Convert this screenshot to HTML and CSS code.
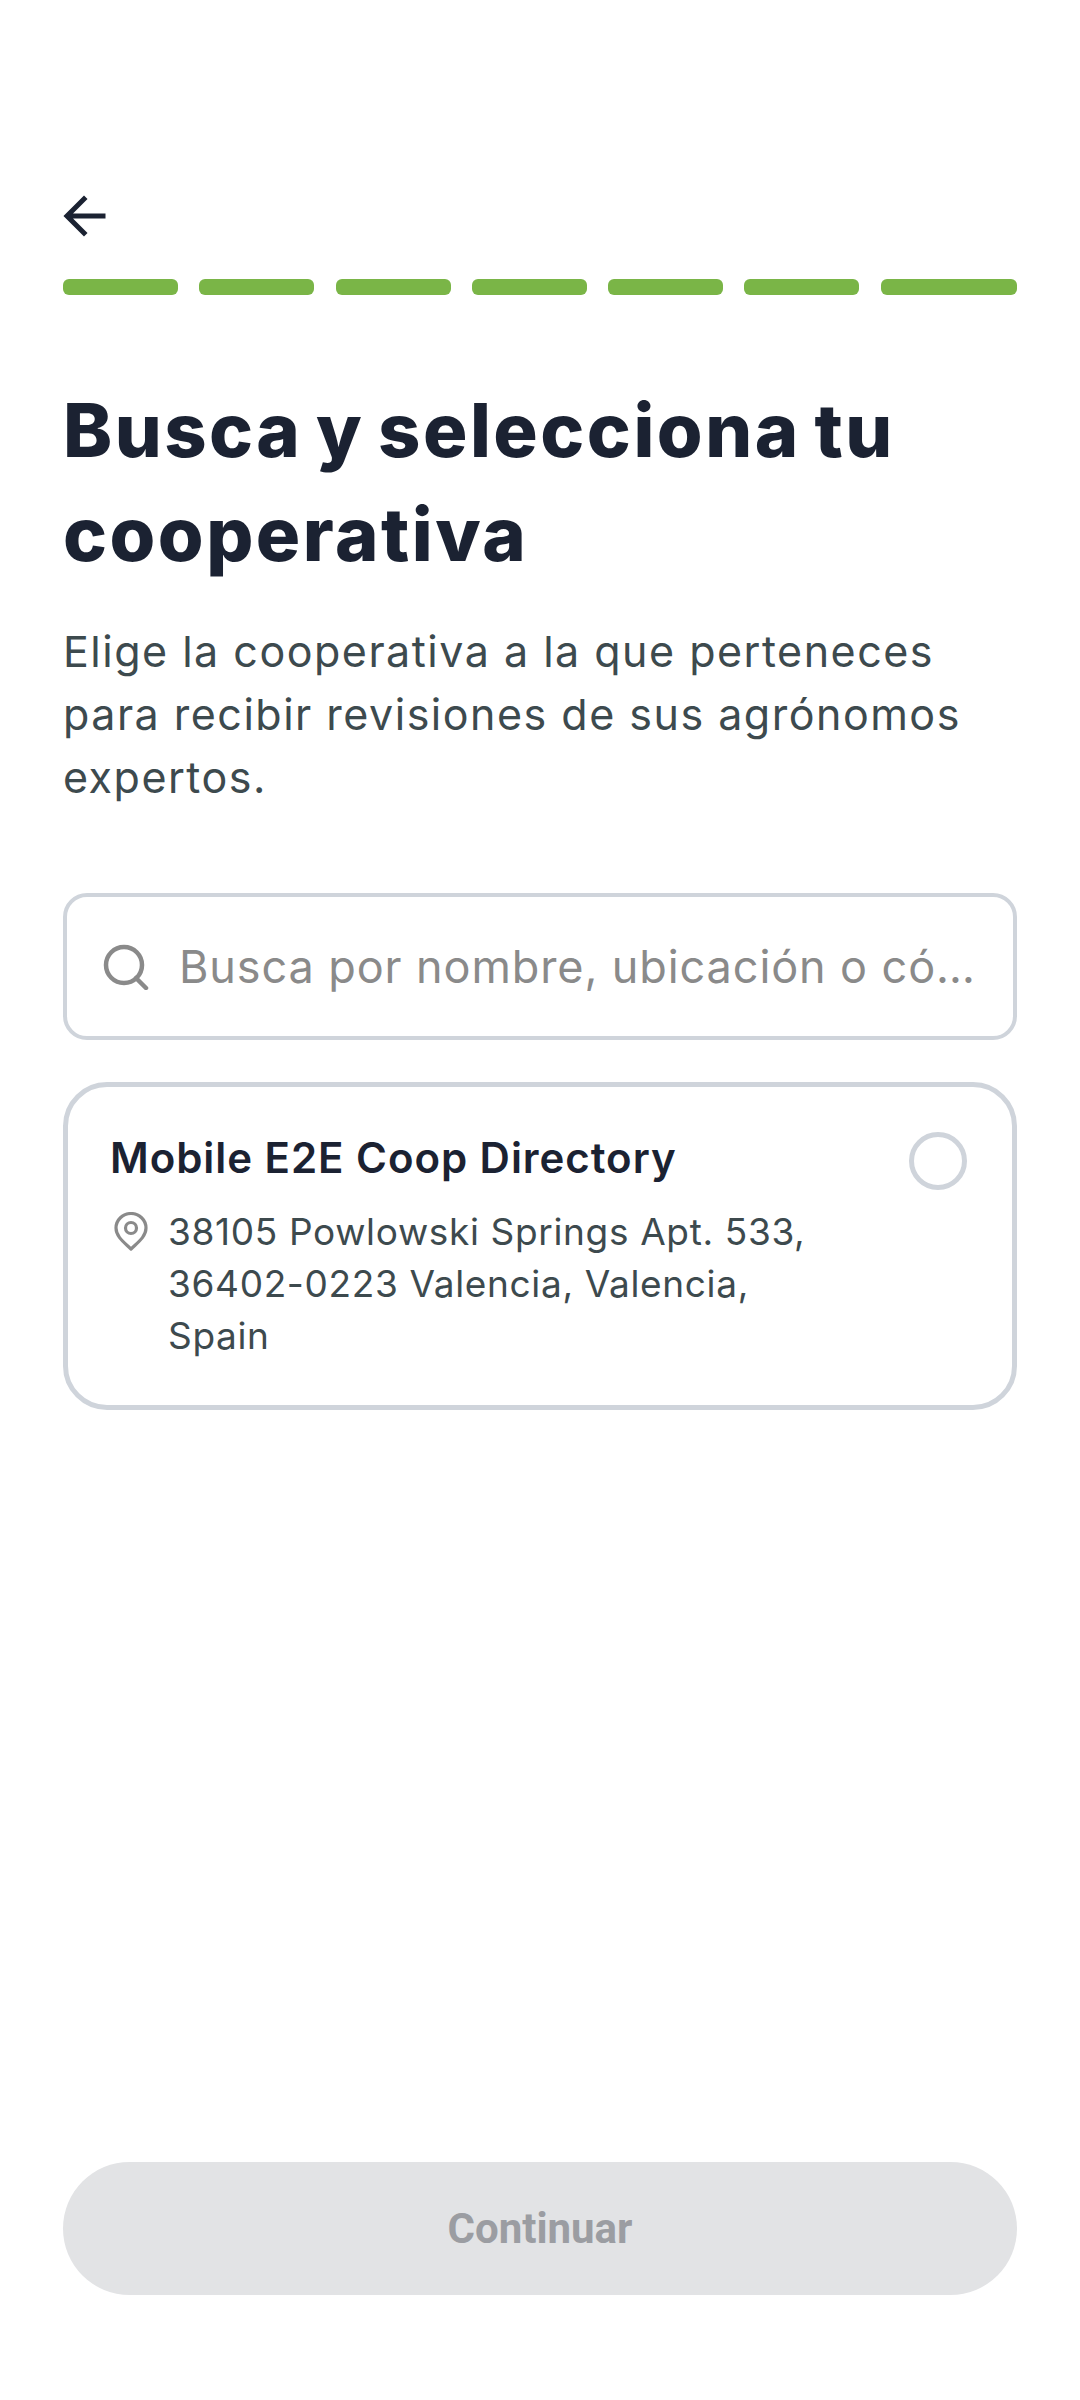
FILE: index.html
```html
<!DOCTYPE html>
<html lang="es">
<head>
    <meta charset="UTF-8">
    <meta name="viewport" content="width=device-width, initial-scale=1.0">
    <title>Busca y selecciona tu cooperativa</title>
    <link rel="stylesheet" href="styles.css">
</head>
<body>
    <main class="screen">
        <button class="back" type="button" aria-label="Volver">
            <svg viewBox="0 0 44 44" width="44" height="44" fill="none" stroke="#1b2232" stroke-width="5" stroke-linecap="square" stroke-linejoin="miter">
                <path d="M21 4 L4 21 L21 38 M6 21 H40"/>
            </svg>
        </button>

        <div class="progress">
            <span></span><span></span><span></span><span></span><span></span><span></span><span></span>
        </div>

        <h1>Busca y selecciona tu cooperativa</h1>
        <p class="intro">Elige la cooperativa a la que perteneces para recibir revisiones de sus agrónomos expertos.</p>

        <label class="search">
            <svg viewBox="0 0 46 46" width="46" height="46" fill="none" stroke="#8a8a8a" stroke-width="4.5" stroke-linecap="round">
                <circle cx="21" cy="21" r="18"/>
                <path d="M33 34 L43 44"/>
            </svg>
            <span class="placeholder">Busca por nombre, ubicación o código postal</span>
        </label>

        <div class="card">
            <div class="card-body">
                <h2>Mobile E2E Coop Directory</h2>
                <div class="address">
                    <svg viewBox="0 0 34 40" width="34" height="40" fill="none" stroke="#8a8a8a" stroke-width="3.2" stroke-linejoin="round">
                        <path d="M17 37 C11 31 2 25 2 16 A15 14.5 0 0 1 32 16 C32 25 23 31 17 37 Z"/>
                        <circle cx="17" cy="16" r="5.5"/>
                    </svg>
                    <p>38105 Powlowski Springs Apt. 533, 36402-0223 Valencia, Valencia, Spain</p>
                </div>
            </div>
            <span class="radio"></span>
        </div>

        <button class="continue" type="button" disabled>Continuar</button>
    </main>
</body>
</html>
```

FILE: styles.css
```css
* {
    box-sizing: border-box;
}

body {
    margin: 0;
    background-color: #ffffff;
    font-family: "Inter", "Liberation Sans", sans-serif;
    color: #1b2232;
}

.screen {
    display: flex;
    flex-direction: column;
    height: 2400px;
    padding: 195px 63px 105px;
}

.back {
    width: 44px;
    height: 44px;
    padding: 0;
    border: none;
    background: none;
}

.back svg {
    display: block;
}

.progress {
    display: flex;
    gap: 21.3px;
    margin-top: 40px;
}

.progress span {
    flex: 0 0 115px;
    height: 16px;
    border-radius: 6px;
    background-color: #7ab547;
}

.progress span:last-child {
    flex: 1;
}

h1 {
    margin: 83px 0 0;
    font-size: 74px;
    line-height: 104px;
    font-weight: 800;
    letter-spacing: 2.5px;
    word-spacing: -5px;
}

.intro {
    margin: 34px 0 0;
    font-size: 43px;
    line-height: 63px;
    color: #3d4a4e;
    letter-spacing: 1.5px;
}

.search {
    display: flex;
    align-items: center;
    gap: 30px;
    height: 147px;
    margin-top: 84px;
    padding: 0 34px 0 36px;
    border: 4px solid #cfd4db;
    border-radius: 24px;
}

.search svg {
    flex-shrink: 0;
}

.placeholder {
    overflow: hidden;
    white-space: nowrap;
    text-overflow: ellipsis;
    font-size: 45px;
    color: #8a8a8a;
    letter-spacing: 0.9px;
}

.card {
    display: flex;
    justify-content: space-between;
    height: 328px;
    margin-top: 42px;
    padding: 43px 45px 0 42px;
    border: 5px solid #cfd4db;
    border-radius: 44px;
}

h2 {
    margin: 0;
    font-size: 42px;
    line-height: 56px;
    font-weight: 600;
    letter-spacing: 0.95px;
}

.address {
    display: flex;
    gap: 20px;
    margin-top: 20px;
}

.address svg {
    flex-shrink: 0;
    margin: 6px 0 0 4px;
}

.address p {
    width: 660px;
    margin: 0;
    font-size: 37px;
    line-height: 52px;
    color: #3d4a4e;
    letter-spacing: 0.65px;
}

.radio {
    flex-shrink: 0;
    width: 58px;
    height: 58px;
    margin-top: 2px;
    border: 5px solid #cfd4db;
    border-radius: 50%;
}

.continue {
    height: 133px;
    margin-top: auto;
    border: none;
    border-radius: 67px;
    background-color: #e2e3e5;
    font-family: "Roboto", sans-serif;
    font-size: 42px;
    font-weight: 700;
    color: #9b9da2;
}
```
